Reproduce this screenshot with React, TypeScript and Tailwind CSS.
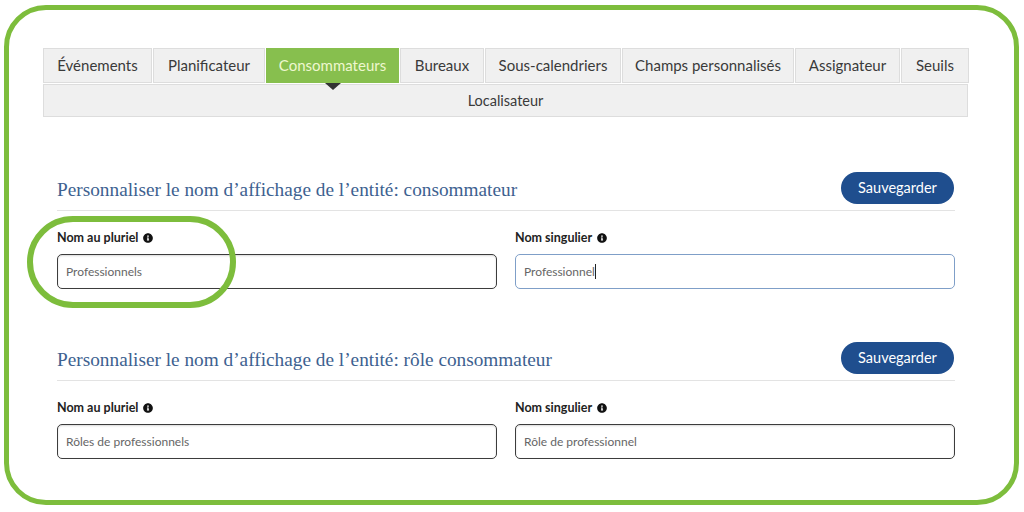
import { FaInfoCircle } from "react-icons/fa";

const TABS = [
  { label: "Événements", w: "w-[109px]" },
  { label: "Planificateur", w: "w-[112px]" },
  { label: "Consommateurs", w: "w-[133px]", active: true },
  { label: "Bureaux", w: "w-[84px]" },
  { label: "Sous-calendriers", w: "w-[136px]" },
  { label: "Champs personnalisés", w: "w-[172px]" },
  { label: "Assignateur", w: "w-[105px]" },
  { label: "Seuils", w: "w-[68px]" },
];

function Field({ label, value, focused }: { label: string; value: string; focused?: boolean }) {
  return (
    <div className="flex flex-col w-[440px]">
      <div className="flex items-center gap-[5px] h-[20px] text-[12.5px] font-bold text-[#222]">
        {label}
        <FaInfoCircle className="text-[#111] w-[10px] h-[10px]" />
      </div>
      <div
        className={
          focused
            ? "mt-[6px] h-[35px] rounded-[5px] border border-[#7f9fc8] bg-white flex items-center px-[8px] text-[12px] text-[#666]"
            : "mt-[6px] h-[35px] rounded-[5px] border-[1.5px] border-[#3c3c3c] bg-white flex items-center px-[8px] text-[12px] text-[#666] shadow-[inset_0_1px_2px_rgba(0,0,0,0.15)]"
        }
      >
        {value}
        {focused && <span className="w-px h-[15px] bg-[#222]" />}
      </div>
    </div>
  );
}

function Section({ title, plural, singular, focused }: { title: string; plural: string; singular: string; focused?: boolean }) {
  return (
    <div className="flex flex-col">
      <div className="flex items-center justify-between h-[32px]">
        <h2 className="text-[19.3px] text-[#3d6190] mt-[4px]" style={{ fontFamily: '"Liberation Serif", serif' }}>
          {title}
        </h2>
        <button className="w-[113px] h-[32px] mr-px rounded-full bg-[#1f4e8e] text-white text-[14.5px]">Sauvegarder</button>
      </div>
      <div className="mt-[6px] h-px bg-[#e3e3e3]" />
      <div className="flex gap-[18px] pt-[17px]">
        <Field label="Nom au pluriel" value={plural} />
        <Field label="Nom singulier" value={singular} focused={focused} />
      </div>
    </div>
  );
}

export default function App() {
  return (
    <div className="relative w-[1024px] h-[512px] bg-white pl-[4px] pt-[5px]" style={{ fontFamily: 'Lato, "Open Sans", sans-serif' }}>
      <div className="w-[1015px] h-[500px] rounded-[42px] border-[5px] border-[#7dbd3c] pl-[34px] pr-[45px] pt-[38px]">
        <div className="flex gap-px">
          {TABS.map((t) =>
            t.active ? (
              <div
                key={t.label}
                className={`${t.w} relative h-[35px] flex items-center justify-center bg-[#87bf4e] text-[#eef7cf] text-[15px]`}
              >
                {t.label}
                <span className="absolute left-1/2 -translate-x-1/2 top-full w-0 h-0 border-l-[8px] border-r-[8px] border-t-[7px] border-l-transparent border-r-transparent border-t-[#333]" />
              </div>
            ) : (
              <div
                key={t.label}
                className={`${t.w} h-[35px] flex items-center justify-center bg-[#f0f0f0] border border-[#dddddd] text-[#3a3a3a] text-[15px]`}
              >
                {t.label}
              </div>
            )
          )}
        </div>
        <div className="mt-px h-[33px] w-[925px] flex items-center justify-center bg-[#f0f0f0] border border-[#dddddd] text-[#3a3a3a] text-[14.5px]">
          Localisateur
        </div>

        <div className="mx-[14px] mt-[55px] flex flex-col gap-[53px]">
          <Section
            title="Personnaliser le nom d’affichage de l’entité: consommateur"
            plural="Professionnels"
            singular="Professionnel"
            focused
          />
          <Section
            title="Personnaliser le nom d’affichage de l’entité: rôle consommateur"
            plural="Rôles de professionnels"
            singular="Rôle de professionnel"
          />
        </div>
      </div>
      <div className="absolute left-[27px] top-[216px] w-[209px] h-[92px] rounded-[46px] border-[6px] border-[#7dbd3c]" />
    </div>
  );
}
